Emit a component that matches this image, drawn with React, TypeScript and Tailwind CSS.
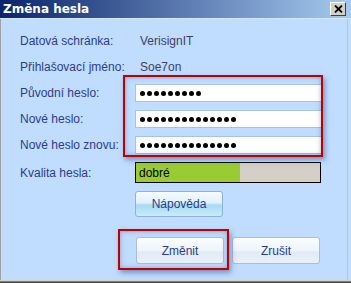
/* Změna hesla — password change dialog */
const font = { fontFamily: '"Liberation Sans", Arial, sans-serif' };

function Dots({ count }: { count: number }) {
    return (
        <div className="flex items-center gap-[2px] pl-[4px]">
            {Array.from({ length: count }).map((_, i) => (
                <span key={i} className="w-[5px] h-[5px] rounded-full bg-black" />
            ))}
        </div>
    );
}

function PasswordInput({ count }: { count: number }) {
    return (
        <div className="h-[18px] w-[188px] bg-white border border-[#a9c1e2] flex items-center">
            <Dots count={count} />
        </div>
    );
}

function Label({ children }: { children: React.ReactNode }) {
    return <span className="text-[12px] leading-[18px] text-[#2b3d8a]">{children}</span>;
}

export default function App() {
    const rows = [
        { label: "Datová schránka:", value: "VerisignIT" },
        { label: "Přihlašovací jméno:", value: "Soe7on" },
    ];

    return (
        <div className="w-[351px] h-[283px] bg-[#c0dcff] flex flex-col relative overflow-hidden" style={font}>
            {/* ── Title bar ── */}
            <div className="h-[19px] shrink-0 flex items-center justify-between pl-[3px] pr-[5px] bg-[linear-gradient(to_right,#0a246a,#a6caf0)] border-b border-[#d6e6fb]">
                <span className="text-white font-bold leading-none" style={{ fontFamily: '"DejaVu Sans", Verdana, sans-serif', fontSize: 12 }}>
                    Změna hesla
                </span>
                <div className="w-[16px] h-[14px] bg-[#d4d0c8] border border-t-white border-l-white border-r-[#404040] border-b-[#404040] flex items-center justify-center">
                    <svg width="9" height="8" viewBox="0 0 9 8">
                        <path d="M1 0.5 L8 7.5 M8 0.5 L1 7.5" stroke="#000" strokeWidth="1.8" />
                    </svg>
                </div>
            </div>

            {/* ── Body ── */}
            <div className="flex-1 flex flex-col border-l border-[#a0a0a0] border-r border-r-[#b0c4dc] mr-[3px]">
                <div className="grid grid-cols-[115px_1fr] gap-y-[8px] pl-[19px] pt-[13px]">
                    {rows.map((r) => (
                        <div key={r.label} className="contents">
                            <Label>{r.label}</Label>
                            <span className="text-[12px] leading-[18px] text-[#3d3f66] pl-[5px]">{r.value}</span>
                        </div>
                    ))}

                    <Label>Původní heslo:</Label>
                    <PasswordInput count={9} />
                    <Label>Nové heslo:</Label>
                    <PasswordInput count={14} />
                    <Label>Nové heslo znovu:</Label>
                    <PasswordInput count={14} />

                    <div className="flex items-center"><Label>Kvalita hesla:</Label></div>
                    <div className="h-[21px] w-[186px] border border-black bg-[#d4d0c8] flex">
                        <div className="w-[104px] bg-[#99cc33] flex items-center pl-[3px] text-[12px] text-black">dobré</div>
                    </div>

                    <div />
                    <button className="h-[26px] w-[88px] rounded-[3px] border border-[#8fb2d0] bg-[linear-gradient(to_bottom,#f6fbff_0%,#dff1fb_45%,#a6dbf2_55%,#c8ecfa_100%)] text-[12px] text-[#2b3d8a]">
                        Nápověda
                    </button>
                </div>

                <div className="flex gap-[8px] pl-[135px] mt-[20px]">
                    <button className="h-[27px] w-[88px] rounded-[3px] border border-[#a9bdd6] bg-[linear-gradient(to_bottom,#fbfdff_0%,#eef4fb_50%,#e1eaf6_55%,#e9f0f9_100%)] text-[12px] text-[#2b3d8a]">
                        Změnit
                    </button>
                    <button className="h-[27px] w-[88px] rounded-[3px] border border-[#a9bdd6] bg-[linear-gradient(to_bottom,#fbfdff_0%,#eef4fb_50%,#e1eaf6_55%,#e9f0f9_100%)] text-[12px] text-[#2b3d8a]">
                        Zrušit
                    </button>
                </div>
            </div>

            {/* window bottom edge */}
            <div className="h-[3px] shrink-0 border-t border-[#d4d0c8] bg-[#808080] border-b border-b-[#404040]" />

            {/* ── Red annotation boxes ── */}
            <div className="absolute left-[123px] top-[75px] w-[200px] h-[82px] border-[2px] border-[#c00000] shadow-[2px_3px_5px_rgba(60,90,140,0.55),inset_0_0_5px_rgba(60,90,140,0.45)]" />
            <div className="absolute left-[118px] top-[229px] w-[111px] h-[41px] border-[2px] border-[#c00000] shadow-[2px_3px_5px_rgba(60,90,140,0.55),inset_0_0_5px_rgba(60,90,140,0.45)]" />
        </div>
    );
}
